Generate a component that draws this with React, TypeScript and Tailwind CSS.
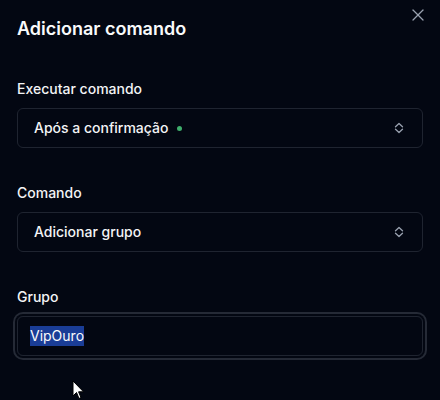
import React from "react";
import { X } from "lucide-react";

function UpDown() {
  return (
    <svg width="12" height="12" viewBox="0 0 12 12" fill="none" className="text-gray-400">
      <path d="M2.5 4.8 L6 1.5 L9.5 4.8" stroke="currentColor" strokeWidth="1.3" strokeLinecap="round" strokeLinejoin="round" />
      <path d="M2.5 7.2 L6 10.5 L9.5 7.2" stroke="currentColor" strokeWidth="1.3" strokeLinecap="round" strokeLinejoin="round" />
    </svg>
  );
}

function Select({ children }: { children: React.ReactNode }) {
  return (
    <div className="h-10 rounded-md border border-[#1f2430] pl-4 pr-[17px] flex items-center justify-between">
      <div className="flex items-center text-sm font-medium text-gray-100">{children}</div>
      <UpDown />
    </div>
  );
}

export default function App() {
  return (
    <div
      className="relative w-[440px] h-[400px] overflow-hidden bg-[#030712] text-gray-50"
      style={{ fontFamily: "Inter, 'Noto Sans', sans-serif" }}
    >
      <button className="absolute right-[12px] top-[5px] text-gray-400">
        <X size={20} strokeWidth={1.5} />
      </button>
      <div className="px-[17px] pt-[15px]">
        <h2 className="text-lg font-semibold leading-7 text-gray-50">Adicionar comando</h2>

        <div className="mt-9">
          <label className="block text-sm font-medium leading-5 text-gray-100">Executar comando</label>
          <div className="mt-[9px]">
            <Select>
              <span>Após a confirmação</span>
              <span className="ml-[9px] w-[5px] h-[5px] rounded-full bg-[#3fae6c]" />
            </Select>
          </div>
        </div>

        <div className="mt-[35px]">
          <label className="block text-sm font-medium leading-5 text-gray-100">Comando</label>
          <div className="mt-[9px]">
            <Select>
              <span>Adicionar grupo</span>
            </Select>
          </div>
        </div>

        <div className="mt-[35px]">
          <label className="block text-sm font-medium leading-5 text-gray-100">Grupo</label>
          <div className="mt-[9px]">
            <div className="h-10 rounded-md border border-[#1f2430] px-3 flex items-center ring-2 ring-[#252a36] ring-offset-2 ring-offset-[#030712]">
              <span className="text-sm text-gray-50 bg-[#1a3d96]">VipOuro</span>
            </div>
          </div>
        </div>
      </div>

      <svg
        className="absolute left-[72px] top-[380px]"
        width="14"
        height="22"
        viewBox="0 0 14 22"
      >
        <path d="M1 1 L1 16 L4.5 12.5 L7 18.5 L9 17.6 L6.6 11.8 L11.5 11.8 Z" fill="#ffffff" stroke="#000000" strokeWidth="1" />
      </svg>
    </div>
  );
}
